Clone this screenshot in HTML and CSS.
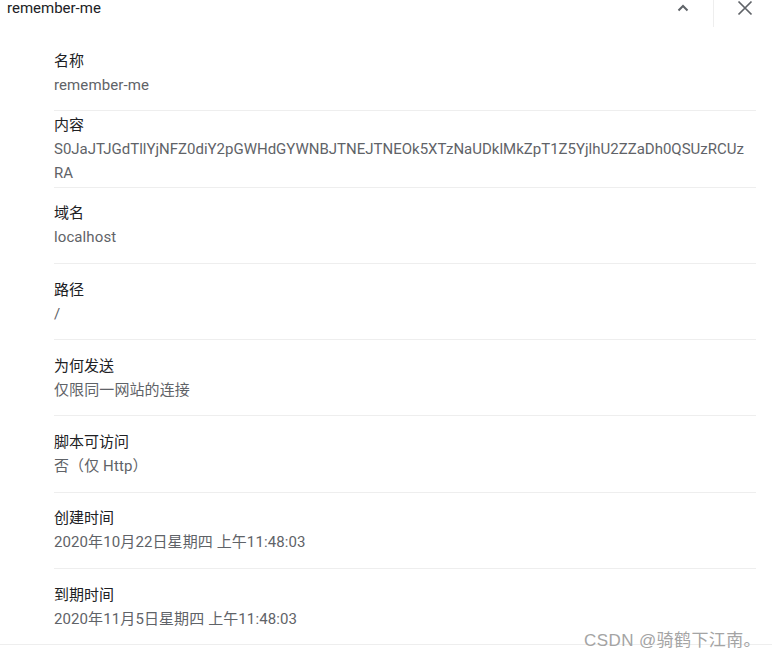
FILE: index.html
```html
<!DOCTYPE html>
<html lang="zh">
<head>
<meta charset="utf-8">
<title>remember-me</title>
<link rel="stylesheet" href="styles.css">
</head>
<body>
<div class="panel">
  <header class="head">
    <span class="title">remember-me</span>
    <div class="actions">
      <button class="btn up" aria-label="收起">
        <svg width="12" height="8" viewBox="0 0 12 8"><path d="M1.5 6.5 L6 2 L10.5 6.5" fill="none" stroke="#5f6368" stroke-width="2"/></svg>
      </button>
      <span class="vdiv"></span>
      <button class="btn close" aria-label="关闭">
        <svg width="16" height="16" viewBox="0 0 16 16"><path d="M1.5 1.5 L14.5 14.5 M14.5 1.5 L1.5 14.5" fill="none" stroke="#5f6368" stroke-width="1.7"/></svg>
      </button>
    </div>
  </header>
  <div class="rows">
    <div class="row"><div class="label">名称</div><div class="value">remember-me</div></div>
    <div class="row"><div class="label">内容</div><div class="value wrap">S0JaJTJGdTllYjNFZ0diY2pGWHdGYWNBJTNEJTNEOk5XTzNaUDklMkZpT1Z5YjlhU2ZZaDh0QSUzRCUzRA</div></div>
    <div class="row"><div class="label">域名</div><div class="value">localhost</div></div>
    <div class="row"><div class="label">路径</div><div class="value">/</div></div>
    <div class="row"><div class="label">为何发送</div><div class="value">仅限同一网站的连接</div></div>
    <div class="row"><div class="label">脚本可访问</div><div class="value">否（仅 Http）</div></div>
    <div class="row"><div class="label">创建时间</div><div class="value">2020年10月22日星期四 上午11:48:03</div></div>
    <div class="row last"><div class="label">到期时间</div><div class="value">2020年11月5日星期四 上午11:48:03</div></div>
  </div>
  <div class="bottom"></div>
  <div class="mark">CSDN @骑鹤下江南。</div>
</div>
</body>
</html>
```
FILE: styles.css
```css
html, body {
  margin: 0;
  padding: 0;
  background: #fff;
}
body {
  font-family: Roboto, "Noto Sans CJK SC", sans-serif;
  font-size: 15px;
  color: #202124;
}
.panel {
  position: relative;
  width: 772px;
  height: 656px;
  overflow: hidden;
}
.head {
  height: 27px;
  display: flex;
  align-items: flex-start;
  justify-content: space-between;
}
.title {
  padding-left: 7px;
  line-height: 17px;
  color: #202124;
}
.actions {
  display: flex;
  align-items: flex-start;
  height: 27px;
}
.btn {
  border: 0;
  background: none;
  padding: 0;
  margin: 0;
  display: flex;
  align-items: center;
  justify-content: center;
}
.up {
  width: 30px;
  height: 16px;
}
.vdiv {
  width: 1px;
  height: 27px;
  background: #eeeeee;
  margin-left: 15px;
  margin-right: 23px;
}
.close {
  width: 16px;
  height: 16px;
  margin-right: 19px;
}
.rows {
  padding: 8px 16px 0 54px;
}
.row {
  height: 75.3px;
  border-bottom: 1px solid #eeeeee;
  display: flex;
  flex-direction: column;
  justify-content: center;
}
.row.last {
  border-bottom: 0;
}
.label {
  line-height: 24px;
  color: #202124;
}
.value {
  line-height: 24px;
  color: #5f6368;
  letter-spacing: 0.1px;
}
.value.wrap {
  word-break: break-all;
  letter-spacing: 0;
  padding-right: 9px;
}
.bottom {
  height: 1px;
  background: #eeeeee;
}
.mark {
  position: absolute;
  right: 11px;
  top: 626px;
  font-family: "Liberation Sans", "Noto Sans CJK SC", sans-serif;
  font-size: 17px;
  color: #a4a4a4;
  letter-spacing: 0.4px;
}
```
